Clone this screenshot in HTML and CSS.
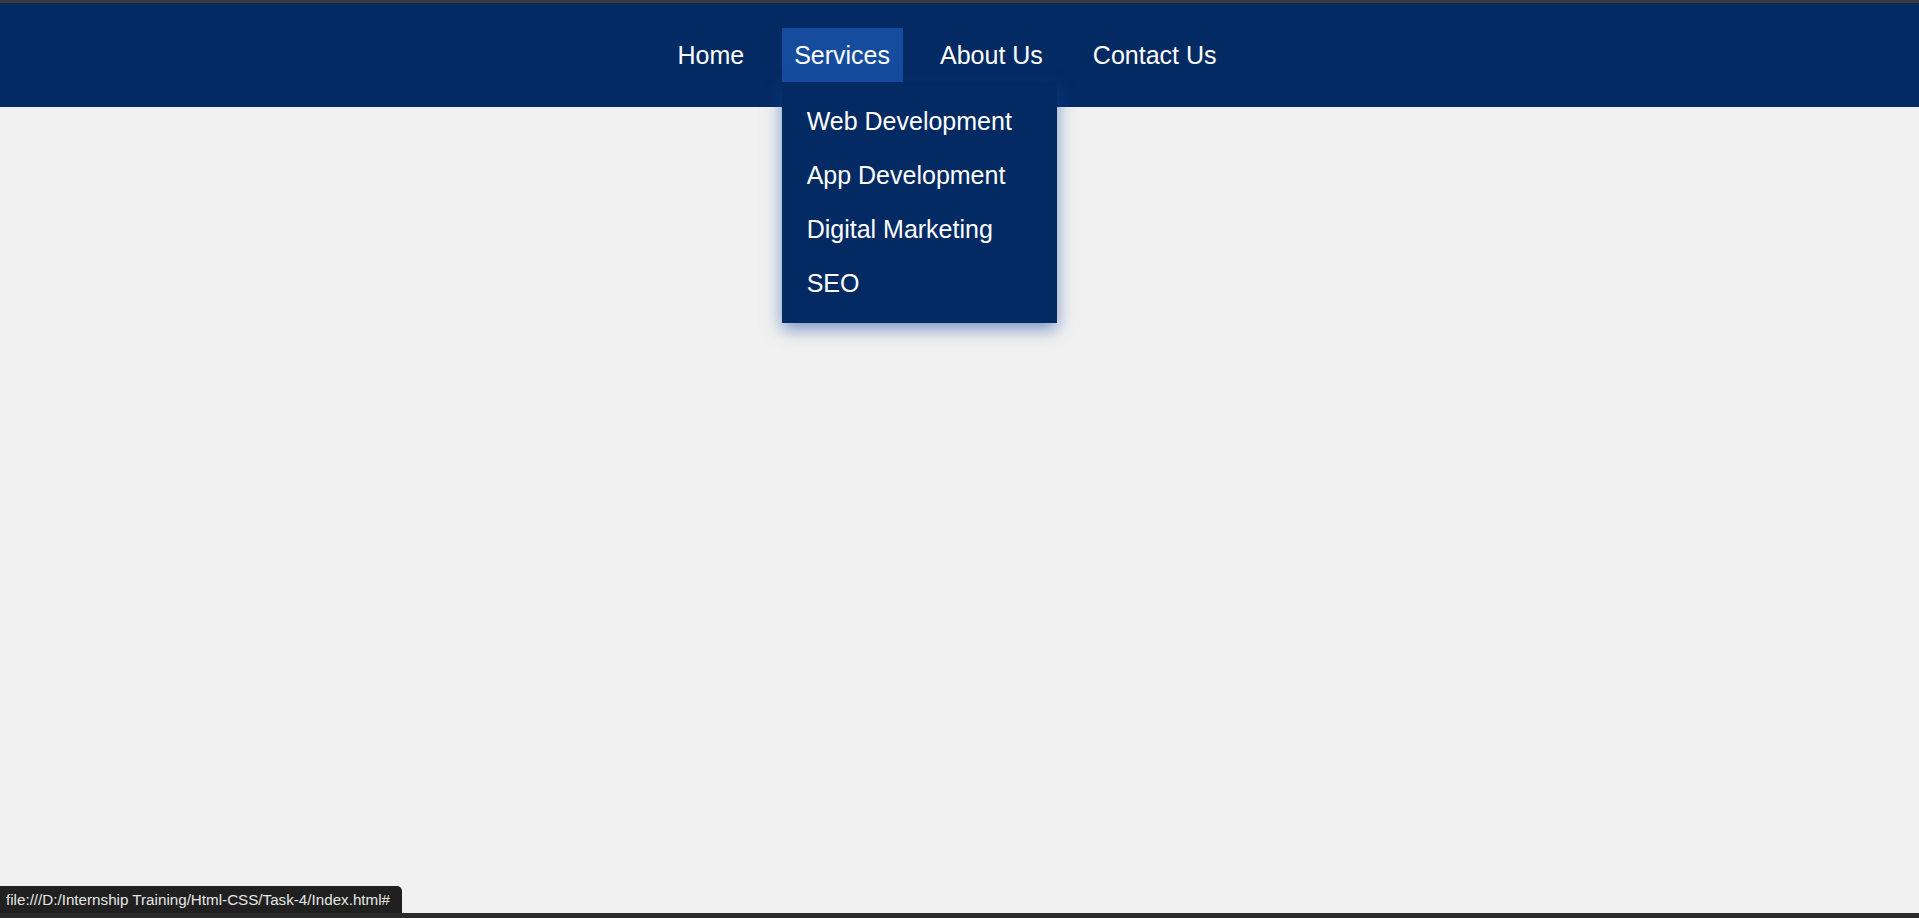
FILE: index.html
```html
<!DOCTYPE html>
<html lang="en">
<head>
<meta charset="utf-8">
<title>Task 4</title>
<link rel="stylesheet" href="styles.css">
</head>
<body>
<div class="chrome-top"></div>
<nav class="navbar">
  <ul class="menu">
    <li class="menu-item"><a href="#" class="menu-link">Home</a></li>
    <li class="menu-item has-dropdown">
      <a href="#" class="menu-link active">Services</a>
      <ul class="dropdown">
        <li><a href="#" class="dropdown-link">Web Development</a></li>
        <li><a href="#" class="dropdown-link">App Development</a></li>
        <li><a href="#" class="dropdown-link">Digital Marketing</a></li>
        <li><a href="#" class="dropdown-link">SEO</a></li>
      </ul>
    </li>
    <li class="menu-item"><a href="#" class="menu-link">About Us</a></li>
    <li class="menu-item"><a href="#" class="menu-link">Contact Us</a></li>
  </ul>
</nav>
<main class="content"></main>
<div class="chrome-bottom"></div>
<div class="status-bubble">file:///D:/Internship Training/Html-CSS/Task-4/Index.html#</div>
</body>
</html>
```

FILE: styles.css
```css
* {
  box-sizing: border-box;
}

html, body {
  height: 100%;
}

body {
  margin: 0;
  display: flex;
  flex-direction: column;
  background: #f1f1f1;
  font-family: "Liberation Sans", Arial, sans-serif;
  overflow: hidden;
}

.chrome-top {
  height: 3px;
  background: #3c3c3c;
  flex: none;
}

.navbar {
  flex: none;
  background: #042a63;
  padding: 25px 0;
  position: relative;
  z-index: 2;
}

.menu {
  list-style: none;
  margin: 0;
  padding: 0 25px 0 0;
  display: flex;
  justify-content: center;
  gap: 25px;
}

.menu-item {
  position: relative;
}

.menu-link {
  display: block;
  padding: 12.5px;
  color: #ffffff;
  text-decoration: none;
  font-size: 25px;
}

.menu-link.active {
  background: #154c9e;
}

.dropdown {
  position: absolute;
  top: 100%;
  left: 0;
  width: 275px;
  margin: 0;
  padding: 12.5px 0;
  list-style: none;
  background: #042a63;
  box-shadow: 0 6px 16px rgba(22, 72, 160, 0.55);
}

.dropdown-link {
  display: block;
  padding: 12.5px 25px;
  color: #ffffff;
  text-decoration: none;
  font-size: 25px;
}

.content {
  flex: 1;
}

.chrome-bottom {
  flex: none;
  height: 5px;
  background: #2a2a2a;
}

.status-bubble {
  position: absolute;
  left: 0;
  bottom: 5px;
  height: 27px;
  padding: 0 12px 0 6px;
  display: flex;
  align-items: center;
  background: #202020;
  color: #e6e6e6;
  font-family: "Liberation Sans", Arial, sans-serif;
  font-size: 15.2px;
  border-top-right-radius: 5px;
  white-space: nowrap;
}
```
